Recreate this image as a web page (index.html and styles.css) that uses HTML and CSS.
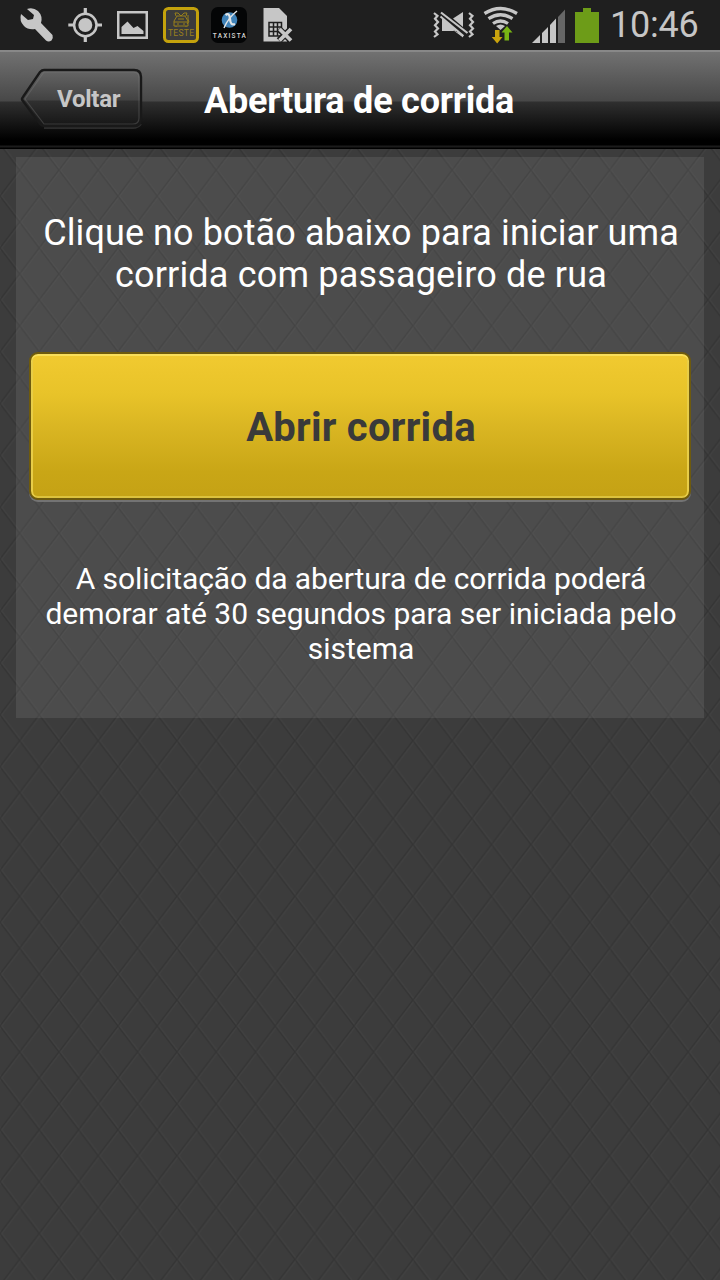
FILE: index.html
```html
<!DOCTYPE html>
<html lang="pt-BR">
<head>
<meta charset="utf-8">
<title>Abertura de corrida</title>
<link rel="stylesheet" href="styles.css">
</head>
<body>
<svg class="texture" width="720" height="1131" aria-hidden="true">
  <defs>
    <pattern id="diamonds" width="39.33" height="51.87" patternUnits="userSpaceOnUse" y="-4.8">
      <g fill="none" stroke-width="1.4">
        <path stroke="#fff" stroke-opacity=".022" d="M1.700 0L41.030 51.870M-37.630 0L1.700 51.870M1.700 51.870L41.030 0M-37.630 51.870L1.700 0"/>
        <path stroke="#000" stroke-opacity=".13" d="M0 0L39.330 51.870M0 51.870L39.330 0"/>
      </g>
    </pattern>
  </defs>
  <rect width="720" height="1131" fill="url(#diamonds)"/>
</svg>
<div class="screen">
  <div class="status">
    <svg class="status-icons" width="300" height="50" viewBox="0 0 300 50">
      <g fill="#c6c6c6">
        <path d="M27 9q6-2 11 2q5 5 3 12l11.500 12q1 3-1 5.500q-3 2-5.500 0L35 29q-7 1-11-3q-5-5-3-12l7 6 5-1 1-4z"/>
        <circle cx="85.300" cy="25" r="7"/>
        <path d="M83.700 8h3.200v6h-3.200zM83.700 36h3.200v6h-3.200zM68.300 23.500h6v3h-6zM96 23.500h6v3h-6z"/>
        <path fill-rule="evenodd" d="M117 11h31v28h-31zM119.500 13.500v23h26v-23z"/>
        <path d="M121.500 34v-7l6-5.500 6 6.500 4-2 6 5v3z"/>
        <path d="M263.500 8h15.500l8 8v25.500h-23.500z"/>
      </g>
      <circle cx="85.300" cy="25" r="11.200" fill="none" stroke="#c6c6c6" stroke-width="2.500"/>
      <rect x="164.500" y="8.500" width="33" height="33" rx="4" fill="#3b3b3b" stroke="#c4a20c" stroke-width="3"/>
      <g fill="none" stroke="#99801b" stroke-width="1">
        <path d="M174 21l3-5h8l3 5v5h-14zM174 22h14M176 16l-1-3h3l3 3 3-3h3l-1 3M178 19h6M187 24q3-2 1-5v-4M177 24h2M183 24h2M176 26v1M186 26v1"/>
      </g>
      <text class="badge-teste" x="181" y="36" textLength="26">TESTE</text>
      <rect x="211" y="7" width="36" height="36" rx="7" fill="#040506"/>
      <circle cx="229.500" cy="20" r="7.800" fill="#3f82b8"/>
      <g fill="none" stroke="#e1e5e7"><path stroke-width="2.300" d="M225.500 15q4-3 4.500 4t5 5"/><path stroke-width="1.500" d="M237 11q-9 7-13 17"/></g>
      <text class="badge-taxista" x="229.300" y="38" textLength="33">TAXISTA</text>
      <g fill="none" stroke="#1f1f1f" stroke-width="1.500"><path d="M269 22.500h12.500v13.500h-12.500zM269 27h12M269 31.500h12M273.500 22v14M277.500 22v14"/></g>
      <path d="M279 29l12 11.500M291 29l-12 11.500" stroke="#1f1f1f" stroke-width="6.500"/>
      <path d="M279.500 29l11.500 11.500M291 29l-11.500 11.500" stroke="#c6c6c6" stroke-width="3.800"/>
    </svg>
    <svg class="status-icons" width="180" height="50" viewBox="430 0 180 50">
      <g fill="none" stroke="#c6c6c6" stroke-width="2.200">
        <path d="M434 13l3.500 2.800-2.500 3 3 3.200-3 3.200 3 3.200-3 3.200 2.500 2.700-3.500 2.700"/>
        <path d="M469 13l3.500 2.800-2.500 3 3 3.200-3 3.200 3 3.200-3 3.200 2.500 2.700-3.500 2.700"/>
      </g>
      <path fill="#c6c6c6" d="M442 18.500l17 12.500h-17zM453 18.500l10-6.500v15zM453 30l10 7.500v-2.500z"/>
      <path d="M440.500 13.500l27 21.500" stroke="#1f1f1f" stroke-width="4.500"/>
      <path d="M441 12.500l26.500 20.500" stroke="#c6c6c6" stroke-width="2.200"/>
      <path d="M440.500 16.500l23 19.500" stroke="#c6c6c6" stroke-width="1.900"/>
      <g fill="none" stroke="#c6c6c6" stroke-width="3.300">
        <path d="M484.500 13.500q16-10 32.500 0M488.500 18.700q12-8 24 0M493 23.500q7.500-5 15 0"/>
      </g>
      <path fill="#c6c6c6" d="M496 26q4.500-3 9 0l-4.500 4z"/>
      <path fill="#c9a30d" d="M495 30h4.500v7h3l-5.300 6.500-5.500-6.500h3.300z"/>
      <path fill="#78b414" d="M504.500 40.500v-8h-3l5.500-6.500 5.500 6.500h-3.500v8z"/>
      <path fill="#c6c6c6" d="M532 43l8-8v8zM542 33l6-6v16h-6zM550 25l6-6.500v24.500h-6z"/>
      <path fill="#666" d="M558 17l7-7.500v33.500h-7z"/>
      <path fill="#6d9c18" d="M575 12h8v-4h8v4h8v31h-24z"/>
    </svg>
    <span class="clock">10:46</span>
  </div>
  <header class="topbar">
    <a class="back">
      <svg class="back-shape" width="126" height="64" viewBox="18 67 126 64">
        <defs><linearGradient id="backFill" x1="0" y1="0" x2="0" y2="1">
          <stop offset="0" stop-color="#666"/><stop offset=".54" stop-color="#424242"/>
          <stop offset=".55" stop-color="#303030"/><stop offset="1" stop-color="#161616"/>
        </linearGradient></defs>
        <path fill="none" stroke="#fff" stroke-opacity=".12" stroke-width="2" d="M44 128h89q5 0 8-4"/>
        <path fill="url(#backFill)" stroke="#191919" stroke-width="2.400" d="M44 70h90q7 0 7 7v42q0 7-7 7H44q-2 0-4-2L23 101q-2-2 0-4l17-25q2-2 4-2z"/>
        <path fill="none" stroke="#888" stroke-opacity=".3" stroke-width="1.200" d="M44 72h89q6 0 6 6v40q0 6-6 6H44L25 99z"/>
      </svg>
      <span class="back-label">Voltar</span>
    </a>
    <h1 class="title">Abertura de corrida</h1>
  </header>
  <main class="card">
    <p class="lead"><span class="lead-first">Clique no botão abaixo para iniciar uma</span><br><span class="lead-last">corrida com passageiro de rua</span></p>
    <button class="primary">Abrir corrida</button>
    <p class="note"><span class="note-first">A solicitação da abertura de corrida poderá</span><br>demorar até 30 segundos para ser iniciada pelo<br>sistema</p>
  </main>
</div>
</body>
</html>
```
FILE: styles.css
```css
* { box-sizing: border-box; }
body {
  margin: 0;
  width: 720px;
  height: 1280px;
  overflow: hidden;
  position: relative;
  background: #3c3c3c;
  color: #fff;
  font-family: Roboto, sans-serif;
}
.texture { position: absolute; left: 0; top: 149px; }
.screen { position: relative; }
.status {
  height: 50px;
  display: flex;
  background: #1f1f1f;
}
.status-icons { flex: none; display: block; }
.status-icons + .status-icons { margin-left: 130px; }
.clock {
  font-size: 36px;
  letter-spacing: -.2px;
  line-height: 51px;
  color: #c6c6c6;
  white-space: nowrap;
}
.badge-teste {
  font: 8.5px Roboto, sans-serif;
  fill: #99801b;
  text-anchor: middle;
}
.badge-taxista {
  font: 500 6.5px Roboto, sans-serif;
  fill: #d5d5d5;
  text-anchor: middle;
}
.topbar {
  height: 99px;
  display: flex;
  border-top: 2px solid #888;
  background: linear-gradient(#717171 0, #484848 49px, #2f2f2f 50px, #000 88px, #000 93px, #1b1b1b 94px, #1b1b1b 95px, #000 96px);
}
.back {
  width: 126px;
  height: 64px;
  margin: 15px 0 0 18px;
  display: grid;
}
.back-shape, .back-label { grid-area: 1 / 1; }
.back-label {
  padding-left: 39px;
  font-size: 24px;
  font-weight: 700;
  letter-spacing: -.25px;
  line-height: 64px;
  color: #c6c6c6;
}
.title {
  margin: 0 0 0 60px;
  font-size: 36px;
  letter-spacing: -.22px;
  line-height: 99px;
  white-space: nowrap;
}
.card {
  margin: 8px 16px 0;
  height: 561px;
  padding: 55px 14px 0;
  background: rgba(255, 255, 255, .082);
}
.lead, .note {
  margin: 0;
  padding-left: 2px;
  text-align: center;
  white-space: nowrap;
}
.lead { font-size: 36px; line-height: 42px; }
.lead-first { letter-spacing: .1px; }
.lead-last { letter-spacing: .17px; }
.primary {
  display: block;
  width: 662px;
  height: 148px;
  margin: 56px -1px 0;
  padding: 2px 0 0 2px;
  border: 2px solid #6e5a0d;
  border-radius: 9px;
  background: linear-gradient(#f1ca30, #e8c329 28%, #d9b522 52%, #c9a616 82%, #c5a215);
  box-shadow: inset 0 2px #f9df5b, inset 2px 0 #e8cd48, inset -2px 0 #e8cd48, inset 0 -2px #dcc23d, 0 2px #737373;
  color: #3a3a3a;
  font: 700 40px Roboto, sans-serif;
  letter-spacing: .25px;
}
.note {
  margin-top: 61px;
  font-size: 30px;
  letter-spacing: -.03px;
  line-height: 35px;
}
.note-first { letter-spacing: -.09px; }
```
